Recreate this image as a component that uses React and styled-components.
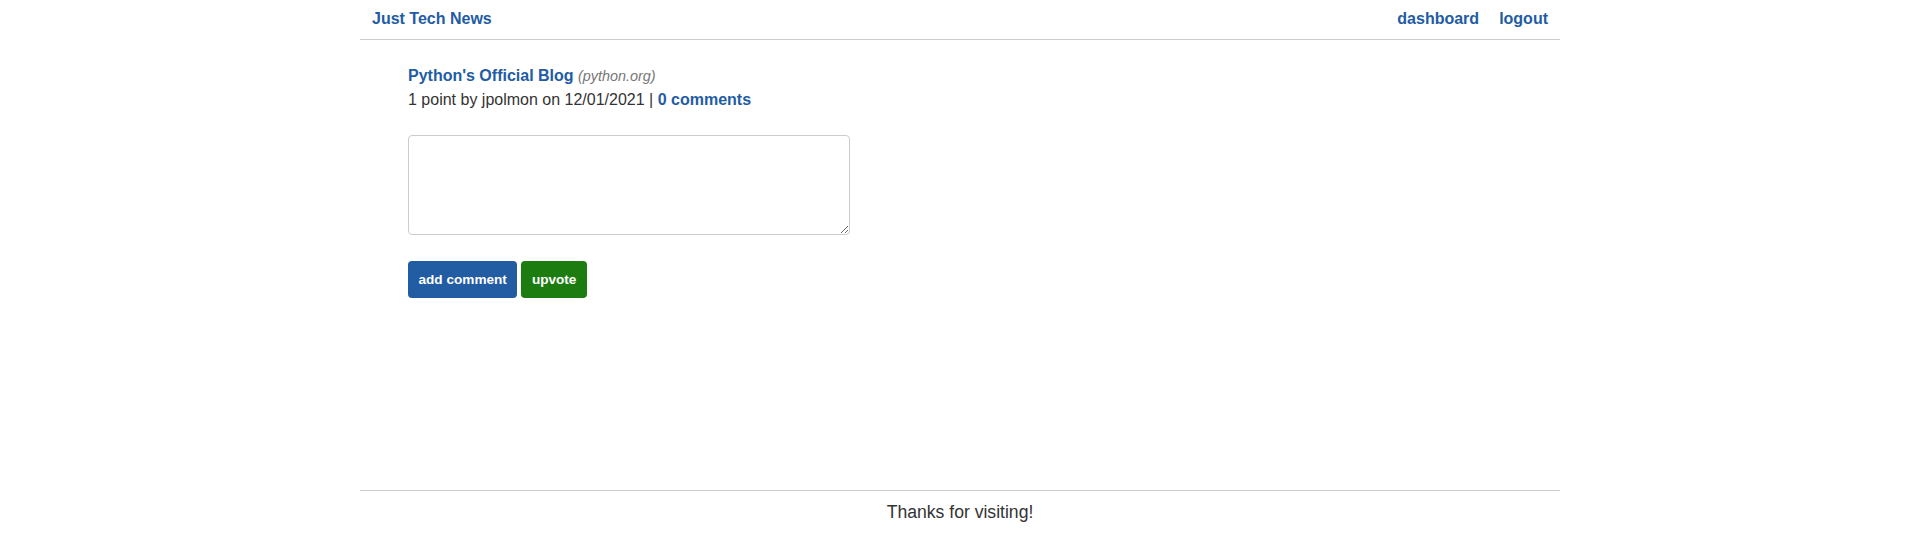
import React from "react";
import styled, { createGlobalStyle } from "styled-components";

const GlobalStyle = createGlobalStyle`
  * { box-sizing: border-box; }
  html, body { margin: 0; padding: 0; background: #fff; }
  body {
    font-family: "Liberation Sans", Arial, sans-serif;
    font-size: 16px;
    line-height: 1.5;
    color: #333;
  }
`;

const Page = styled.div`
  max-width: 1200px;
  margin: 0 auto;
  min-height: 100vh;
  display: flex;
  flex-direction: column;
`;

const Header = styled.header`
  height: 40px;
  display: flex;
  align-items: center;
  justify-content: space-between;
  padding: 0 12px 1px;
  border-bottom: 1px solid #ccc;
`;

const Link = styled.a`
  color: #225ca3;
  font-weight: bold;
  text-decoration: none;
  cursor: pointer;
`;

const Nav = styled.nav`
  display: flex;
  gap: 20px;
`;

const Main = styled.main`
  flex: 1;
  padding: 24px 48px;
`;

const Domain = styled.span`
  color: #777;
  font-style: italic;
  font-size: 14.4px;
`;

const CommentForm = styled.form`
  margin-top: 23px;
`;

const TextArea = styled.textarea`
  display: block;
  width: 442px;
  height: 100px;
  border: 1px solid #ccc;
  border-radius: 4px;
  padding: 8px;
  font-family: inherit;
  font-size: 16px;
  resize: both;
  outline: none;
`;

const Buttons = styled.div`
  display: flex;
  gap: 4px;
  margin-top: 26px;
`;

const Button = styled.button`
  height: 37px;
  padding: 0 10.5px;
  border: none;
  border-radius: 4px;
  background: ${(p) => (p.$variant === "green" ? "#1c7c10" : "#225ca3")};
  color: #fff;
  font-family: "Liberation Sans", Arial, sans-serif;
  font-weight: bold;
  font-size: 13.6px;
  cursor: pointer;
`;

const Footer = styled.footer`
  border-top: 1px solid #ccc;
  height: 46px;
  display: flex;
  align-items: center;
  justify-content: center;
  font-size: 17.6px;
  padding-bottom: 2px;
`;

export default function App() {
  return (
    <>
      <GlobalStyle />
      <Page>
        <Header>
          <Link>Just Tech News</Link>
          <Nav>
            <Link>dashboard</Link>
            <Link>logout</Link>
          </Nav>
        </Header>
        <Main>
          <article>
            <div>
              <Link>Python's Official Blog</Link> <Domain>(python.org)</Domain>
            </div>
            <div>
              1 point by jpolmon on 12/01/2021 | <Link>0 comments</Link>
            </div>
          </article>
          <CommentForm onSubmit={(e) => e.preventDefault()}>
            <TextArea name="comment-body" />
            <Buttons>
              <Button type="submit">add comment</Button>
              <Button type="button" $variant="green">upvote</Button>
            </Buttons>
          </CommentForm>
        </Main>
        <Footer>Thanks for visiting!</Footer>
      </Page>
    </>
  );
}
